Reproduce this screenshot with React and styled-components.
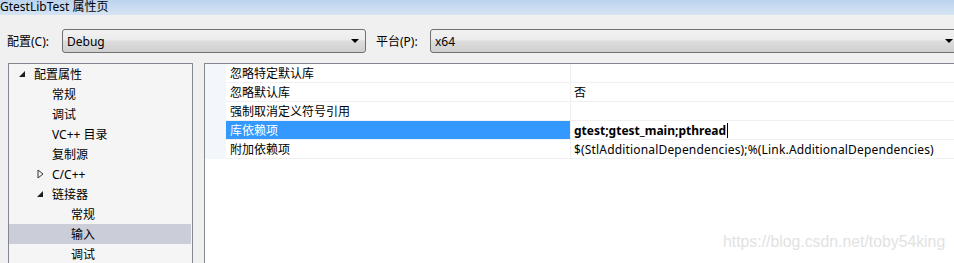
import React from 'react';
import styled, { createGlobalStyle } from 'styled-components';

const GlobalStyle = createGlobalStyle`
  html, body {
    margin: 0;
    padding: 0;
    width: 954px;
    height: 263px;
    overflow: hidden;
    background: #f0f0f0;
  }
  body {
    font-family: "Segoe UI", "Noto Sans", "Noto Sans CJK SC", sans-serif;
    font-size: 12px;
    color: #000;
  }
`;

const Window = styled.div`
  width: 954px;
  height: 263px;
  display: flex;
  flex-direction: column;
  overflow: hidden;
`;

const TitleBar = styled.div`
  height: 15px;
  flex: none;
  background: linear-gradient(#bcd3ee, #d6e4f4);
  font-size: 12px;
  line-height: 14px;
  white-space: nowrap;
`;

const ConfigRow = styled.div`
  flex: none;
  display: flex;
  align-items: center;
  height: 26px;
  margin-top: 13px;
  white-space: nowrap;
`;

const Label = styled.span`
  box-sizing: border-box;
  width: ${p => p.w}px;
  padding-left: ${p => p.pl}px;
  flex: none;
`;

const Combo = styled.div`
  flex: none;
  width: ${p => p.w}px;
  height: 24px;
  box-sizing: border-box;
  border: 1px solid #707070;
  border-radius: 3px;
  background: linear-gradient(#f2f2f2 0%, #ebebeb 45%, #dddddd 50%, #cfcfcf 100%);
  display: flex;
  align-items: center;
  padding-left: 4px;
  padding-right: 6px;
  margin-right: ${p => p.mr || 0}px;
`;

const ComboText = styled.span`
  flex: 1;
`;

const Arrow = styled.span`
  width: 0;
  height: 0;
  border-left: 4px solid transparent;
  border-right: 4px solid transparent;
  border-top: 4px solid #000;
`;

const Main = styled.div`
  flex: 1;
  display: flex;
  margin-top: 9px;
  min-height: 0;
`;

const TreePanel = styled.div`
  flex: none;
  width: 185px;
  margin-left: 8px;
  box-sizing: border-box;
  border: 1px solid #828790;
  border-bottom: none;
  background: #f5f5f5;
  margin-right: 11px;
`;

const TreeRow = styled.div`
  height: 20px;
  display: flex;
  align-items: center;
  padding-left: ${p => p.indent}px;
  background: ${p => (p.selected ? '#cbcdd9' : 'transparent')};
  margin-right: 1px;
  white-space: nowrap;
`;

const Toggle = styled.span`
  width: 15px;
  flex: none;
  display: flex;
  align-items: center;
`;

const GridPanel = styled.div`
  flex: 1;
  box-sizing: border-box;
  border-top: 1px solid #828790;
  border-left: 1px solid #828790;
  background: #fff;
  display: flex;
  min-width: 0;
`;

const Gutter = styled.div`
  width: 21px;
  flex: none;
  height: 95px;
  background: #f3f6fb;
`;

const Rows = styled.div`
  flex: 1;
  min-width: 0;
`;

const Row = styled.div`
  display: flex;
  height: 19px;
  box-sizing: border-box;
  border-bottom: 1px solid #f0f0f0;
`;

const NameCell = styled.div`
  width: 345px;
  flex: none;
  box-sizing: border-box;
  padding-left: 4px;
  display: flex;
  align-items: center;
  background: ${p => (p.selected ? '#3399ff' : '#fff')};
  color: ${p => (p.selected ? '#fff' : '#000')};
  border-right: 1px solid #f0f0f0;
  white-space: nowrap;
`;

const ValueCell = styled.div`
  flex: 1;
  padding-left: 3px;
  display: flex;
  align-items: center;
  font-weight: ${p => (p.bold ? 700 : 400)};
  letter-spacing: ${p => (p.bold ? 0 : 0.17)}px;
  white-space: nowrap;
`;

const Caret = styled.span`
  display: inline-block;
  width: 1px;
  height: 15px;
  background: #000;
  margin-left: 1px;
`;

const Watermark = styled.div`
  position: absolute;
  left: 723px;
  top: 233px;
  font-family: "Liberation Sans", Arial, sans-serif;
  font-size: 15.8px;
  color: #e2e2e2;
  white-space: nowrap;
`;

function Expanded() {
  return (
    <svg width="6" height="6" viewBox="0 0 6 6">
      <path d="M6 0 L6 6 L0 6 Z" fill="#1e1e1e" />
    </svg>
  );
}

function Collapsed() {
  return (
    <svg width="7" height="10" viewBox="0 0 7 10">
      <path d="M1 1 L6 5 L1 9 Z" fill="none" stroke="#333" strokeWidth="1" />
    </svg>
  );
}

const tree = [
  { label: '配置属性', indent: 10, toggle: 'open' },
  { label: '常规', indent: 43 },
  { label: '调试', indent: 43 },
  { label: 'VC++ 目录', indent: 43 },
  { label: '复制源', indent: 43 },
  { label: 'C/C++', indent: 28, toggle: 'closed' },
  { label: '链接器', indent: 28, toggle: 'open' },
  { label: '常规', indent: 62 },
  { label: '输入', indent: 62, selected: true },
  { label: '调试', indent: 62 },
];

const props = [
  { name: '忽略特定默认库', value: '' },
  { name: '忽略默认库', value: '否' },
  { name: '强制取消定义符号引用', value: '' },
  { name: '库依赖项', value: 'gtest;gtest_main;pthread', selected: true },
  { name: '附加依赖项', value: '$(StlAdditionalDependencies);%(Link.AdditionalDependencies)' },
];

export default function App() {
  return (
    <Window>
      <GlobalStyle />
      <TitleBar>GtestLibTest 属性页</TitleBar>
      <ConfigRow>
        <Label w={62} pl={7}>配置(C):</Label>
        <Combo w={304} mr={10}>
          <ComboText>Debug</ComboText>
          <Arrow />
        </Combo>
        <Label w={54} pl={0}>平台(P):</Label>
        <Combo w={530}>
          <ComboText>x64</ComboText>
          <Arrow />
        </Combo>
      </ConfigRow>
      <Main>
        <TreePanel>
          {tree.map((t, i) => (
            <TreeRow key={i} indent={t.indent} selected={t.selected}>
              {t.toggle && (
                <Toggle>{t.toggle === 'open' ? <Expanded /> : <Collapsed />}</Toggle>
              )}
              {t.label}
            </TreeRow>
          ))}
        </TreePanel>
        <GridPanel>
          <Gutter />
          <Rows>
            {props.map((p, i) => (
              <Row key={i}>
                <NameCell selected={p.selected}>{p.name}</NameCell>
                <ValueCell bold={p.selected}>
                  {p.value}
                  {p.selected && <Caret />}
                </ValueCell>
              </Row>
            ))}
          </Rows>
        </GridPanel>
      </Main>
      <Watermark>https://blog.csdn.net/toby54king</Watermark>
    </Window>
  );
}
